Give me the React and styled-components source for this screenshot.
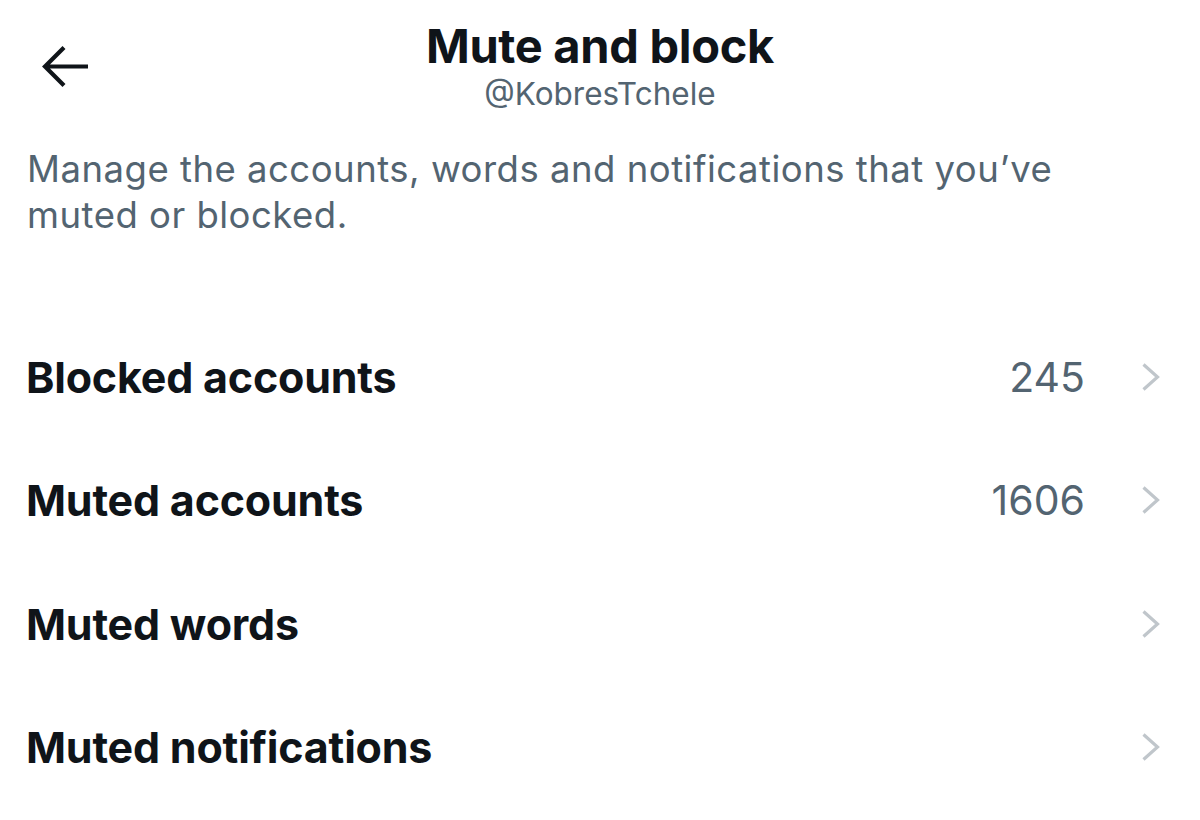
import styled, { createGlobalStyle } from "styled-components";

const GlobalStyle = createGlobalStyle`
  body {
    margin: 0;
    background: #ffffff;
    font-family: Inter, "Noto Sans", sans-serif;
    -webkit-font-smoothing: antialiased;
  }
`;

const rows = [
  { label: "Blocked accounts", count: "245" },
  { label: "Muted accounts", count: "1606" },
  { label: "Muted words" },
  { label: "Muted notifications" },
];

export default function App() {
  return (
    <Page>
      <GlobalStyle />
      <Header>
        <BackButton aria-label="Back">
          <svg width="50" height="48" viewBox="0 0 50 48" fill="none">
            <path
              d="M24 4.5L5 23.5 24 42.5M5 23.5H48"
              stroke="#0f1419"
              strokeWidth="4.2"
            />
          </svg>
        </BackButton>
        <TitleBlock>
          <Title>Mute and block</Title>
          <Handle>@KobresTchele</Handle>
        </TitleBlock>
      </Header>
      <Description>
        Manage the accounts, words and notifications that you’ve muted or
        blocked.
      </Description>
      <List>
        {rows.map(({ label, count }) => (
          <Row key={label}>
            <Label>{label}</Label>
            {count && <Count>{count}</Count>}
            <Chevron viewBox="0 0 20 30" width="20" height="30">
              <path
                d="M2.5 2.5l14 12.5-14 12.5"
                fill="none"
                stroke="#c0c6cb"
                strokeWidth="3.2"
              />
            </Chevron>
          </Row>
        ))}
      </List>
    </Page>
  );
}

const Page = styled.div`
  width: 1200px;
  height: 820px;
  overflow: hidden;
  background: #fff;
`;

const Header = styled.header`
  display: grid;
  grid-template-columns: 120px 1fr 120px;
  align-items: start;
  padding-top: 18px;
`;

const BackButton = styled.button`
  border: 0;
  background: none;
  padding: 0;
  margin: 25px 0 0 40px;
  width: 50px;
  height: 48px;
  display: flex;
  cursor: pointer;
`;

const TitleBlock = styled.div`
  display: flex;
  flex-direction: column;
  align-items: center;
`;

const Title = styled.h1`
  margin: 0;
  font-size: 47px;
  font-weight: 700;
  line-height: 56px;
  letter-spacing: -0.3px;
  color: #0f1419;
`;

const Handle = styled.div`
  font-size: 31.5px;
  line-height: 40px;
  color: #536471;
`;

const Description = styled.p`
  margin: 32px 0 0;
  padding: 0 120px 0 27px;
  font-size: 36.5px;
  line-height: 46px;
  letter-spacing: 0.5px;
  color: #536471;
`;

const List = styled.ul`
  list-style: none;
  margin: 77px 0 0;
  padding: 0;
`;

const Row = styled.li`
  display: flex;
  align-items: center;
  height: 123.5px;
  padding: 0 39px 0 26px;
`;

const Label = styled.span`
  flex: 1;
  font-size: 43px;
  font-weight: 700;
  color: #0f1419;
  letter-spacing: -0.2px;
`;

const Count = styled.span`
  font-size: 41px;
  color: #536471;
  margin-right: 56px;
`;

const Chevron = styled.svg`
  flex: none;
`;
